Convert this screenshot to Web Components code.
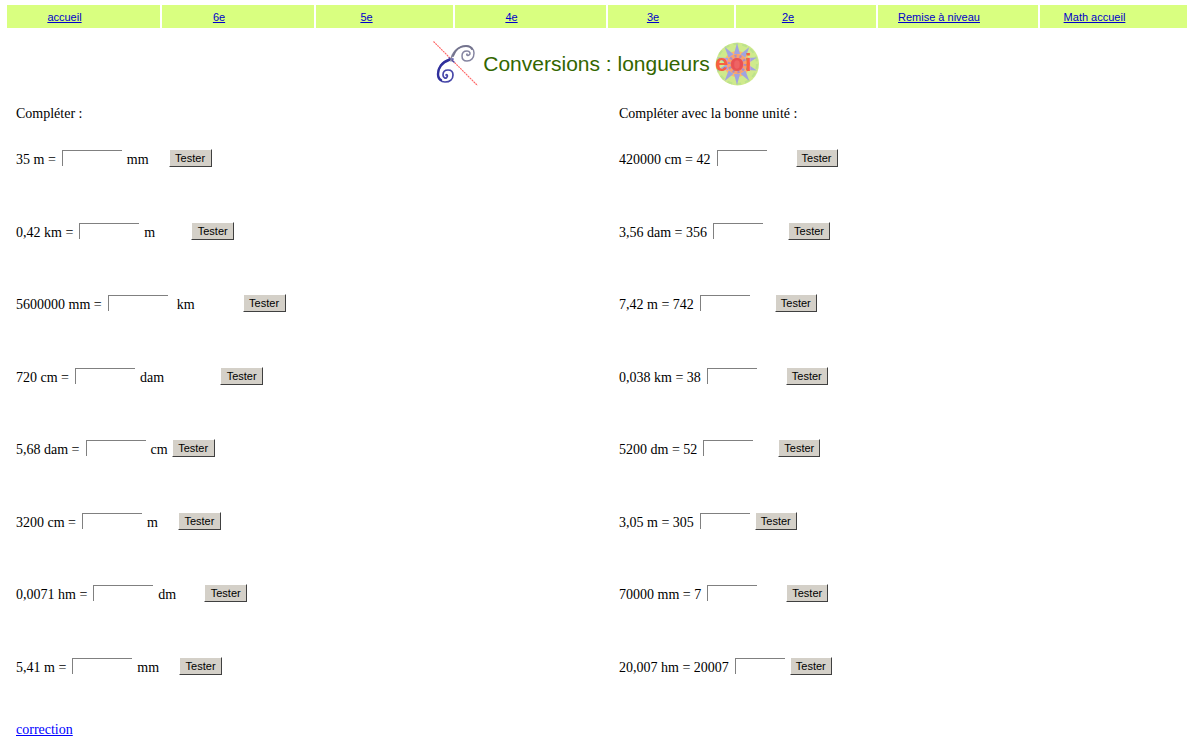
<!DOCTYPE html>
<html lang="fr">
<head>
<meta charset="utf-8">
<title>Conversions : longueurs</title>
<style>
body { margin: 5px 5px 0 7px; background: #fff; color: #000; font: 14px/16px "Liberation Serif", "Times New Roman", serif; }
</style>
</head>
<body>
<conversion-page></conversion-page>
<script>
class NavCell extends HTMLElement {
  constructor() {
    super();
    this.attachShadow({ mode: "open" }).innerHTML = `
      <style>
        :host { display: block; background: #d9ff80; padding: 5px 36px 3px 0; text-align: center; font: 11px/15px "Liberation Sans", Arial, sans-serif; white-space: nowrap; }
        :host([wide]) { padding-right: 38px; }
        a { color: #0000cc; }
      </style>
      <a href="#"><slot></slot></a>`;
  }
}
customElements.define("nav-cell", NavCell);

class SiteNav extends HTMLElement {
  constructor() {
    super();
    this.attachShadow({ mode: "open" }).innerHTML = `
      <style>
        :host { display: block; }
        nav { display: grid; grid-template-columns: 153fr 152fr 137fr 151fr 126fr 140fr 160fr 147fr; gap: 2px; }
      </style>
      <nav>
        <nav-cell wide>accueil</nav-cell><nav-cell wide>6e</nav-cell><nav-cell>5e</nav-cell><nav-cell wide>4e</nav-cell>
        <nav-cell>3e</nav-cell><nav-cell>2e</nav-cell><nav-cell wide>Remise à niveau</nav-cell><nav-cell wide>Math accueil</nav-cell>
      </nav>`;
  }
}
customElements.define("site-nav", SiteNav);

class SpiralLogo extends HTMLElement {
  constructor() {
    super();
    const six = "M20 18C12 18 5 25 5 33C5 38 8 41 12 41C17 41 20 38 20 34C20 31 18 29 15 29C12 29 10 31 10 34C10 37 13 38 14 36C15 35 14 33 13 34";
    this.attachShadow({ mode: "open" }).innerHTML = `
      <style>:host, svg { display: block; }</style>
      <svg width="45" height="46" viewBox="0 0 45 46" fill="none" aria-hidden="true">
        <path d="M0.500 0.500L44.500 44.500" stroke="#ff6464" stroke-width="1.1" stroke-dasharray="2 .7"/>
        <g stroke-linecap="round">
          <path d="${six}" stroke="#4646a8" stroke-width="1.7"/>
          <path d="M16 19C9 21 5 27 5 33C5 36 6 38 8 39" stroke="#30309c" stroke-width="2.4"/>
          <path d="M16 17L21 21" stroke="#4646a8" stroke-width="1.4"/>
          <g transform="matrix(0 1 1 0 0 0)">
            <path d="${six}" stroke="#8484a0" stroke-width="1.5"/>
            <path d="M15 20C9 22 5 27 5 33C5 36 6 38 8 39" stroke="#74748e" stroke-width="2"/>
          </g>
        </g>
      </svg>`;
  }
}
customElements.define("spiral-logo", SpiralLogo);

class SunLogo extends HTMLElement {
  constructor() {
    super();
    const rays = Array.from({ length: 10 }, (_, i) =>
      `<path d="M19 12L22 1L25 12Z" transform="rotate(${i * 36} 22 22)"/>`).join("");
    this.attachShadow({ mode: "open" }).innerHTML = `
      <style>:host, svg { display: block; }</style>
      <svg width="46" height="44" viewBox="0 0 46 44" role="img" aria-label="eoi">
        <circle cx="22.500" cy="22" r="21.500" fill="#cfea8c"/>
        <circle cx="22" cy="22" r="20" fill="none" stroke="#bce28c" stroke-width="2" stroke-dasharray="5 4"/>
        <circle cx="22" cy="22" r="13" fill="#ffb868"/>
        <g fill="#a0a4e0">${rays}</g>
        <circle cx="22" cy="22" r="10" fill="#f7a070"/>
        <circle cx="22" cy="22" r="8" fill="none" stroke="#a98ec4" stroke-width="3" stroke-dasharray="2 3"/>
        <circle cx="22" cy="22" r="6" fill="#ee6464"/>
        <text x="0" y="29" font-family="Liberation Sans, Arial, sans-serif" font-weight="bold" font-size="24" fill="#f96040">e</text>
        <text x="15" y="29" font-family="Liberation Sans, Arial, sans-serif" font-weight="bold" font-size="23" fill="#e84c50" fill-opacity=".8">o</text>
        <text x="30" y="29" font-family="Liberation Sans, Arial, sans-serif" font-weight="bold" font-size="24" fill="#f96040">i</text>
      </svg>`;
  }
}
customElements.define("sun-logo", SunLogo);

class PageTitle extends HTMLElement {
  constructor() {
    super();
    this.attachShadow({ mode: "open" }).innerHTML = `
      <style>
        :host { display: flex; justify-content: center; align-items: center; gap: 5px; height: 46px; }
        h1 { margin: 0; color: #336600; font: 21px/24px "Liberation Sans", Arial, sans-serif; white-space: nowrap; }
      </style>
      <spiral-logo></spiral-logo><h1><slot></slot></h1><sun-logo></sun-logo>`;
  }
}
customElements.define("page-title", PageTitle);

class UnitQuestion extends HTMLElement {
  constructor() {
    super();
    this.attachShadow({ mode: "open" });
  }
  connectedCallback() {
    const unit = this.getAttribute("unit");
    this.shadowRoot.innerHTML = `
      <style>
        :host { display: flex; align-items: center; height: 18px; white-space: nowrap; }
        label, span { line-height: 16px; padding-top: 3px; }
        input { box-sizing: border-box; width: var(--field, 60px); height: 16px; margin: 0 0 0 6px; padding: 0 2px; border: 0 solid #808080; border-width: 1px 0 0 1px; border-radius: 0; outline: 0; background: #fff; font: 11px "Liberation Sans", Arial, sans-serif; }
        span { margin-left: ${this.getAttribute("before") || 5}px; }
        button { box-sizing: border-box; width: var(--button, 43px); height: 18px; margin: 0 0 0 ${this.getAttribute("gap")}px; padding: 0; border: 1px solid; border-color: #fff #404040 #404040 #fff; border-radius: 0; background: #d4d0c8; color: #000; font: 11px/14px "Liberation Sans", Arial, sans-serif; }
      </style>
      <label for="answer"><slot></slot></label>
      <input id="answer" type="text">
      ${unit ? `<span>${unit}</span>` : ""}
      <button type="button">Tester</button>`;
  }
}
customElements.define("unit-question", UnitQuestion);

class QuestionColumn extends HTMLElement {
  constructor() {
    super();
    this.attachShadow({ mode: "open" }).innerHTML = `
      <style>
        :host { display: block; }
        p { margin: 0 0 27px; }
        ::slotted(unit-question) { margin-bottom: 55px; }
        ::slotted(unit-question:nth-child(even)) { margin-bottom: 54px; }
        ::slotted(unit-question:last-child) { margin-bottom: 0; }
      </style>
      <p></p><slot></slot>`;
  }
  connectedCallback() {
    this.shadowRoot.querySelector("p").textContent = this.getAttribute("heading");
  }
}
customElements.define("question-column", QuestionColumn);

class ConversionPage extends HTMLElement {
  constructor() {
    super();
    this.attachShadow({ mode: "open" }).innerHTML = `
      <style>
        :host { display: block; }
        page-title { margin-top: 13px; }
        main { display: grid; grid-template-columns: 1fr 1fr; column-gap: 35px; margin: 19px 0 0; padding-left: 9px; }
        .units { --field: 50px; --button: 42px; }
        footer { padding: 47px 0 0 9px; }
        a { color: #0000ff; }
      </style>
      <site-nav></site-nav>
      <page-title>Conversions : longueurs</page-title>
      <main>
        <question-column heading="Compléter :">
          <unit-question unit="mm" gap="20">35 m =</unit-question>
          <unit-question unit="m" gap="36">0,42 km =</unit-question>
          <unit-question unit="km" before="9" gap="48">5600000 mm =</unit-question>
          <unit-question unit="dam" gap="56">720 cm =</unit-question>
          <unit-question unit="cm" gap="4">5,68 dam =</unit-question>
          <unit-question unit="m" gap="20">3200 cm =</unit-question>
          <unit-question unit="dm" gap="28">0,0071 hm =</unit-question>
          <unit-question unit="mm" gap="20">5,41 m =</unit-question>
        </question-column>
        <question-column class="units" heading="Compléter avec la bonne unité :">
          <unit-question gap="29">420000 cm = 42</unit-question>
          <unit-question gap="25">3,56 dam = 356</unit-question>
          <unit-question gap="25">7,42 m = 742</unit-question>
          <unit-question gap="29">0,038 km = 38</unit-question>
          <unit-question gap="25">5200 dm = 52</unit-question>
          <unit-question gap="5">3,05 m = 305</unit-question>
          <unit-question gap="29">70000 mm = 7</unit-question>
          <unit-question gap="5">20,007 hm = 20007</unit-question>
        </question-column>
      </main>
      <footer><a href="#">correction</a></footer>`;
  }
}
customElements.define("conversion-page", ConversionPage);
</script>
</body>
</html>
